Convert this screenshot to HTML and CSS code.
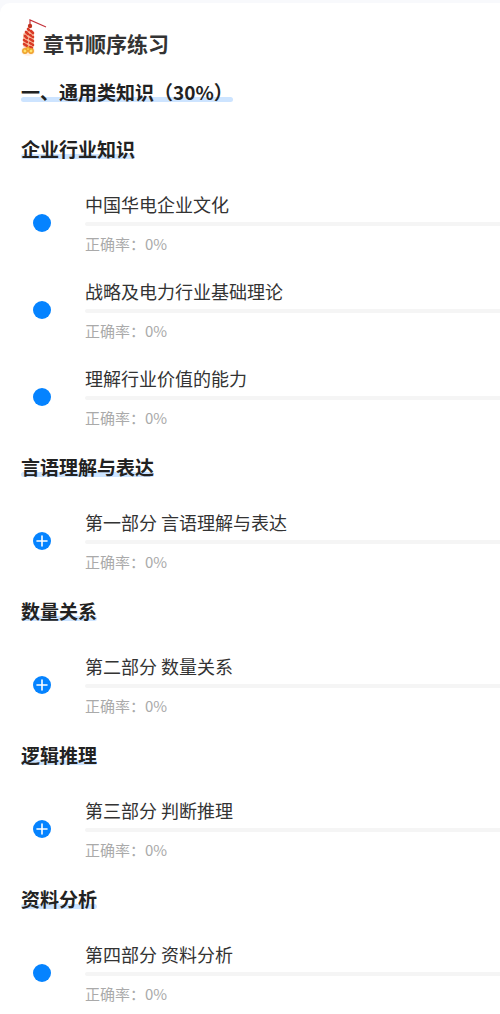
FILE: index.html
```html
<!DOCTYPE html>
<html lang="zh-CN">
<head>
<meta charset="utf-8">
<meta name="viewport" content="width=device-width, initial-scale=1">
<title>章节顺序练习</title>
<link rel="stylesheet" href="styles.css">
</head>
<body>
<svg class="symbols" aria-hidden="true">
  <symbol id="dot" viewBox="0 0 18 18"><circle cx="9" cy="9" r="9" fill="#0583ff"/></symbol>
  <symbol id="plus" viewBox="0 0 18 18"><circle cx="9" cy="9" r="9" fill="#0583ff"/><path d="M9 4v10M4 9h10" stroke="#fff" stroke-width="1.6" stroke-linecap="round"/></symbol>
</svg>
<main class="card">
  <header class="title">
    <svg class="firecracker" viewBox="0 0 26 40" aria-hidden="true">
      <ellipse cx="7" cy="32" rx="7" ry="5" fill="#fff0e6"/>
      <path d="M9 6V1L25 8" fill="none" stroke="#c4333b" stroke-width="1.2"/>
      <circle cx="9" cy="7" r="2.2" fill="#c2331f"/>
      <path d="M7 11h3l3 3v13l-2 2H4l-2-2V15z" fill="#f9bda0"/>
      <g stroke="#d93a26" stroke-width="2.6" stroke-linecap="round">
        <path d="M8 11l-1-1M5 13l2 2M10 12l2 2M4 17l2 2M9 16l3 2M3 21l3 2M9 20l3 2M3 25l3 2M9 24l3 2M9 28l2 1"/>
      </g>
      <path d="M7 13l1 1M6 17l1 1M11 16l1 1M4 20l1 1M8 22l1 1M5 24l1 1M10 26l1 1" stroke="#ff9a73" stroke-width="1"/>
      <g fill="#ffe36b" stroke="#efa12c" stroke-width="1.5">
        <circle cx="4" cy="32" r="2.2"/><circle cx="10" cy="32" r="2.2"/><path d="M7 28l2 2-2 2-2-2z"/>
      </g>
    </svg>
    <h1>章节顺序练习</h1>
  </header>
  <h2 class="heading"><span class="mark">一、通用类知识（30%）</span></h2>
  <div class="sections">
    <section class="section">
      <h3 class="heading"><span class="mark">企业行业知识</span></h3>
      <ul class="items">
        <li class="item"><svg class="node"><use href="#dot"/></svg><div class="body"><p class="name">中国华电企业文化</p><div class="bar"></div><p class="rate">正确率：0%</p></div></li>
        <li class="item"><svg class="node"><use href="#dot"/></svg><div class="body"><p class="name">战略及电力行业基础理论</p><div class="bar"></div><p class="rate">正确率：0%</p></div></li>
        <li class="item"><svg class="node"><use href="#dot"/></svg><div class="body"><p class="name">理解行业价值的能力</p><div class="bar"></div><p class="rate">正确率：0%</p></div></li>
      </ul>
    </section>
    <section class="section">
      <h3 class="heading"><span class="mark">言语理解与表达</span></h3>
      <ul class="items">
        <li class="item"><svg class="node"><use href="#plus"/></svg><div class="body"><p class="name">第一部分 言语理解与表达</p><div class="bar"></div><p class="rate">正确率：0%</p></div></li>
      </ul>
    </section>
    <section class="section">
      <h3 class="heading"><span class="mark">数量关系</span></h3>
      <ul class="items">
        <li class="item"><svg class="node"><use href="#plus"/></svg><div class="body"><p class="name">第二部分 数量关系</p><div class="bar"></div><p class="rate">正确率：0%</p></div></li>
      </ul>
    </section>
    <section class="section">
      <h3 class="heading"><span class="mark">逻辑推理</span></h3>
      <ul class="items">
        <li class="item"><svg class="node"><use href="#plus"/></svg><div class="body"><p class="name">第三部分 判断推理</p><div class="bar"></div><p class="rate">正确率：0%</p></div></li>
      </ul>
    </section>
    <section class="section">
      <h3 class="heading"><span class="mark">资料分析</span></h3>
      <ul class="items">
        <li class="item"><svg class="node"><use href="#dot"/></svg><div class="body"><p class="name">第四部分 资料分析</p><div class="bar"></div><p class="rate">正确率：0%</p></div></li>
      </ul>
    </section>
  </div>
</main>
</body>
</html>
```
FILE: styles.css
```css
* { box-sizing: border-box; }
body {
  display: flex;
  flex-direction: column;
  min-height: 100vh;
  margin: 0;
  padding-top: 3px;
  background: #f8f9fc;
  color: #222;
  font-family: "Noto Sans CJK SC", sans-serif;
}
h1, h2, h3, p, ul { margin: 0; padding: 0; }
ul { list-style: none; }
.symbols { position: absolute; width: 0; height: 0; }
.card {
  flex: 1;
  padding: 16px 0 6px 21px;
  background: #fff;
  border-radius: 10px 0 0 0;
}
.title { display: flex; height: 44px; }
.firecracker { width: 26px; height: 40px; margin-right: -4px; }
.title h1 {
  padding-top: 9px;
  font-size: 21px;
  line-height: 30px;
  font-weight: 700;
  color: #333;
}
.heading {
  font-size: 19px;
  line-height: 28px;
  font-weight: 700;
}
h2.heading { margin: 15px 0 29px; }
.mark { position: relative; z-index: 0; display: inline-block; }
.mark::before {
  content: "";
  position: absolute;
  z-index: -1;
  left: 0;
  right: 0;
  bottom: 4px;
  height: 5px;
  border-radius: 3px;
  background: #cde4ff;
}
.sections { display: flex; flex-direction: column; gap: 25px; }
.items { display: flex; flex-direction: column; gap: 25px; margin-top: 29px; }
.item { display: flex; align-items: center; gap: 34px; }
.node { flex: none; width: 18px; height: 18px; margin-left: 12px; }
.body { flex: 1; }
.name { font-size: 18px; line-height: 24px; color: #333; }
.bar {
  height: 4px;
  margin: 6px 0 8px;
  border-radius: 2px 0 0 2px;
  background: #f5f5f5;
}
.rate { font-size: 15px; line-height: 20px; color: #aaa; }
```
